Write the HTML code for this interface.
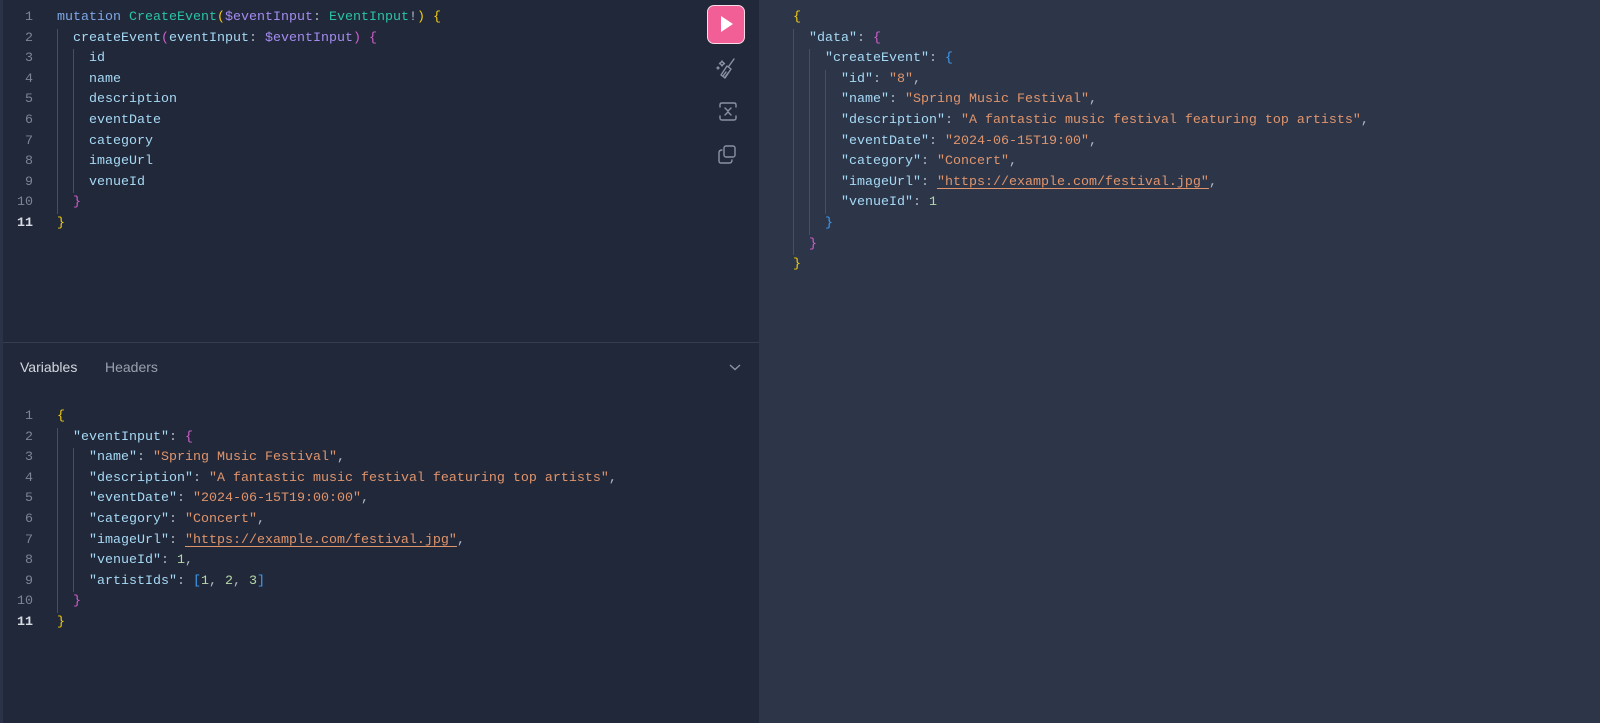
<!DOCTYPE html>
<html><head><meta charset="utf-8"><style>
*{margin:0;padding:0;box-sizing:border-box}
body{width:1600px;height:723px;background:#2d3649;overflow:hidden;position:relative;font-family:"Liberation Mono",monospace;font-size:13.33px}
.left{position:absolute;left:3px;top:0;width:756px;height:723px;background:#212839}
.strip{position:absolute;left:0;top:0;width:3px;height:723px;background:#2a3347}
.div{position:absolute;left:3px;top:342px;width:756px;height:1px;background:#353d4f}
.ed{position:absolute;line-height:20.6px;white-space:pre}
.ln{position:absolute;width:30px;text-align:right;color:#7d8595;line-height:20.6px}
.ln div.a{color:#d8dce3;font-weight:bold}
.g{display:inline-block;width:16px;height:20.6px;vertical-align:top;border-left:1px solid #474f61}
.kw{color:#7fa6e6}.ty{color:#2bc3a2}.va{color:#a48bef}.f{color:#a6d9f5}.p{color:#b3bac6}
.s{color:#e0946c}.u{color:#e0946c;text-decoration:underline;text-underline-offset:3px}
.n{color:#b6d7a8}.y{color:#f3cc10}.m{color:#d35fd0}.b{color:#3d9bf0}
.tabs{position:absolute;top:359px;font-family:"Liberation Sans",sans-serif;font-size:14px}
.run{position:absolute;left:707px;top:5px;width:38px;height:39px;background:#f25e96;border:1.5px solid #f7dbe7;border-radius:7px}
</style></head><body>
<div class="left"></div><div class="strip"></div><div class="div"></div>

<div class="ln" style="left:3px;top:8px"><div>1</div><div>2</div><div>3</div><div>4</div><div>5</div><div>6</div><div>7</div><div>8</div><div>9</div><div>10</div><div class="a">11</div></div>
<div class="ed" style="left:57px;top:8px"><div><span class="kw">mutation</span> <span class="ty">CreateEvent</span><span class="y">(</span><span class="va">$eventInput</span><span class="p">:</span> <span class="ty">EventInput</span><span class="p">!</span><span class="y">)</span> <span class="y">{</span></div><div><span class="g"></span><span class="f">createEvent</span><span class="m">(</span><span class="f">eventInput</span><span class="p">:</span> <span class="va">$eventInput</span><span class="m">)</span> <span class="m">{</span></div><div><span class="g"></span><span class="g"></span><span class="f">id</span></div><div><span class="g"></span><span class="g"></span><span class="f">name</span></div><div><span class="g"></span><span class="g"></span><span class="f">description</span></div><div><span class="g"></span><span class="g"></span><span class="f">eventDate</span></div><div><span class="g"></span><span class="g"></span><span class="f">category</span></div><div><span class="g"></span><span class="g"></span><span class="f">imageUrl</span></div><div><span class="g"></span><span class="g"></span><span class="f">venueId</span></div><div><span class="g"></span><span class="m">}</span></div><div><span class="y">}</span></div></div>

<div class="run"><svg width="38" height="38" viewBox="0 0 38 38" style="position:absolute;left:-1px;top:-1px"><path d="M14 11 L26 19 L14 27 Z" fill="#fff"/></svg></div>
<svg style="position:absolute;left:714px;top:56px" width="28" height="28" viewBox="0 0 28 28" fill="none" stroke="#8a92a3" stroke-width="1.4" stroke-linecap="round" stroke-linejoin="round">
<path d="M20 3 L15 10 M13 10 L17 13 L11 22 L7 19 Z M9 20 L12 16 M11 21 L14 17"/><path d="M8 5 l1 1.5 1.5 1 -1.5 1 -1 1.5 -1-1.5 -1.5-1 1.5-1z"/><path d="M4 11 l1 1 -1 1 -1 -1z"/></svg>
<svg style="position:absolute;left:714px;top:98px" width="28" height="28" viewBox="0 0 28 28" fill="none" stroke="#8a92a3" stroke-width="1.4" stroke-linecap="round" stroke-linejoin="round">
<path d="M6 9 V7 Q6 5 8 5 H20 Q22 5 22 7 V9 M6 18 V20 Q6 22 8 22 H20 Q22 22 22 20 V18 M11 10 L14 13 L17 10 M11 17 L14 14 L17 17"/></svg>
<svg style="position:absolute;left:714px;top:141px" width="28" height="28" viewBox="0 0 28 28" fill="none" stroke="#8a92a3" stroke-width="1.4" stroke-linecap="round" stroke-linejoin="round">
<rect x="10" y="5" width="11" height="11" rx="2"/><path d="M8 9 Q5 9 5 12 V20 Q5 22 7 22 H15 Q18 22 18 19"/></svg>

<div class="tabs" style="left:20px;color:#d4d8df">Variables</div>
<div class="tabs" style="left:105px;color:#9aa1ae">Headers</div>
<svg style="position:absolute;left:728px;top:362px" width="14" height="10" viewBox="0 0 14 10" fill="none" stroke="#8a92a3" stroke-width="1.4"><path d="M2 3 L7 7.5 L12 3"/></svg>

<div class="ln" style="left:3px;top:407px"><div>1</div><div>2</div><div>3</div><div>4</div><div>5</div><div>6</div><div>7</div><div>8</div><div>9</div><div>10</div><div class="a">11</div></div>
<div class="ed" style="left:57px;top:407px"><div><span class="y">{</span></div><div><span class="g"></span><span class="f">"eventInput"</span><span class="p">:</span> <span class="m">{</span></div><div><span class="g"></span><span class="g"></span><span class="f">"name"</span><span class="p">:</span> <span class="s">"Spring Music Festival"</span><span class="p">,</span></div><div><span class="g"></span><span class="g"></span><span class="f">"description"</span><span class="p">:</span> <span class="s">"A fantastic music festival featuring top artists"</span><span class="p">,</span></div><div><span class="g"></span><span class="g"></span><span class="f">"eventDate"</span><span class="p">:</span> <span class="s">"2024-06-15T19:00:00"</span><span class="p">,</span></div><div><span class="g"></span><span class="g"></span><span class="f">"category"</span><span class="p">:</span> <span class="s">"Concert"</span><span class="p">,</span></div><div><span class="g"></span><span class="g"></span><span class="f">"imageUrl"</span><span class="p">:</span> <span class="u">"https://example.com/festival.jpg"</span><span class="p">,</span></div><div><span class="g"></span><span class="g"></span><span class="f">"venueId"</span><span class="p">:</span> <span class="n">1</span><span class="p">,</span></div><div><span class="g"></span><span class="g"></span><span class="f">"artistIds"</span><span class="p">:</span> <span class="b">[</span><span class="n">1</span><span class="p">,</span> <span class="n">2</span><span class="p">,</span> <span class="n">3</span><span class="b">]</span></div><div><span class="g"></span><span class="m">}</span></div><div><span class="y">}</span></div></div>

<div class="ed" style="left:793px;top:8px"><div><span class="y">{</span></div><div><span class="g"></span><span class="f">"data"</span><span class="p">:</span> <span class="m">{</span></div><div><span class="g"></span><span class="g"></span><span class="f">"createEvent"</span><span class="p">:</span> <span class="b">{</span></div><div><span class="g"></span><span class="g"></span><span class="g"></span><span class="f">"id"</span><span class="p">:</span> <span class="s">"8"</span><span class="p">,</span></div><div><span class="g"></span><span class="g"></span><span class="g"></span><span class="f">"name"</span><span class="p">:</span> <span class="s">"Spring Music Festival"</span><span class="p">,</span></div><div><span class="g"></span><span class="g"></span><span class="g"></span><span class="f">"description"</span><span class="p">:</span> <span class="s">"A fantastic music festival featuring top artists"</span><span class="p">,</span></div><div><span class="g"></span><span class="g"></span><span class="g"></span><span class="f">"eventDate"</span><span class="p">:</span> <span class="s">"2024-06-15T19:00"</span><span class="p">,</span></div><div><span class="g"></span><span class="g"></span><span class="g"></span><span class="f">"category"</span><span class="p">:</span> <span class="s">"Concert"</span><span class="p">,</span></div><div><span class="g"></span><span class="g"></span><span class="g"></span><span class="f">"imageUrl"</span><span class="p">:</span> <span class="u">"https://example.com/festival.jpg"</span><span class="p">,</span></div><div><span class="g"></span><span class="g"></span><span class="g"></span><span class="f">"venueId"</span><span class="p">:</span> <span class="n">1</span></div><div><span class="g"></span><span class="g"></span><span class="b">}</span></div><div><span class="g"></span><span class="m">}</span></div><div><span class="y">}</span></div></div>
</body></html>
